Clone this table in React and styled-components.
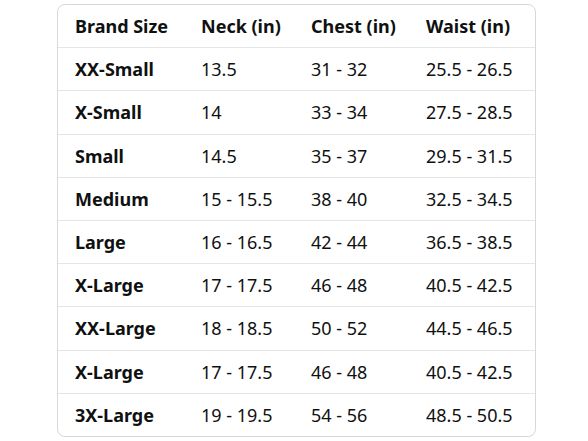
import React from "react";
import styled, { createGlobalStyle } from "styled-components";

const Global = createGlobalStyle`
  html, body { margin: 0; padding: 0; background: #ffffff; }
  body { font-family: "Noto Sans", "Liberation Sans", sans-serif; color: #0f1111; }
`;

const Page = styled.div`
  padding: 4px 0 0 57px;
`;

const Table = styled.table`
  width: 477px;
  border-collapse: separate;
  border-spacing: 0;
  border: 1px solid #d5d9d9;
  border-radius: 8px;
  table-layout: fixed;
`;

const Cell = styled.td`
  height: 42.2px;
  padding: 0 0 0 17px;
  font-size: 18px;
  line-height: 20px;
  font-weight: ${(p) => (p.$bold ? 700 : 400)};
  border-bottom: ${(p) => (p.$last ? "none" : "1px solid #e3e6e6")};
  text-align: left;
  vertical-align: middle;
  white-space: nowrap;
  color: #0f1111;
`;

const HeadCell = styled(Cell).attrs({ as: "th" })``;

const cols = [126, 110, 115, 126];
const headers = ["Brand Size", "Neck (in)", "Chest (in)", "Waist (in)"];
const rows = [
  ["XX-Small", "13.5", "31 - 32", "25.5 - 26.5"],
  ["X-Small", "14", "33 - 34", "27.5 - 28.5"],
  ["Small", "14.5", "35 - 37", "29.5 - 31.5"],
  ["Medium", "15 - 15.5", "38 - 40", "32.5 - 34.5"],
  ["Large", "16 - 16.5", "42 - 44", "36.5 - 38.5"],
  ["X-Large", "17 - 17.5", "46 - 48", "40.5 - 42.5"],
  ["XX-Large", "18 - 18.5", "50 - 52", "44.5 - 46.5"],
  ["X-Large", "17 - 17.5", "46 - 48", "40.5 - 42.5"],
  ["3X-Large", "19 - 19.5", "54 - 56", "48.5 - 50.5"],
];

export default function App() {
  return (
    <>
      <Global />
      <Page>
        <Table>
          <colgroup>
            {cols.map((w, i) => (
              <col key={i} style={{ width: w }} />
            ))}
          </colgroup>
          <thead>
            <tr>
              {headers.map((h) => (
                <HeadCell key={h} $bold>
                  {h}
                </HeadCell>
              ))}
            </tr>
          </thead>
          <tbody>
            {rows.map((r, i) => (
              <tr key={i}>
                {r.map((c, j) => (
                  <Cell key={j} $bold={j === 0} $last={i === rows.length - 1}>
                    {c}
                  </Cell>
                ))}
              </tr>
            ))}
          </tbody>
        </Table>
      </Page>
    </>
  );
}
